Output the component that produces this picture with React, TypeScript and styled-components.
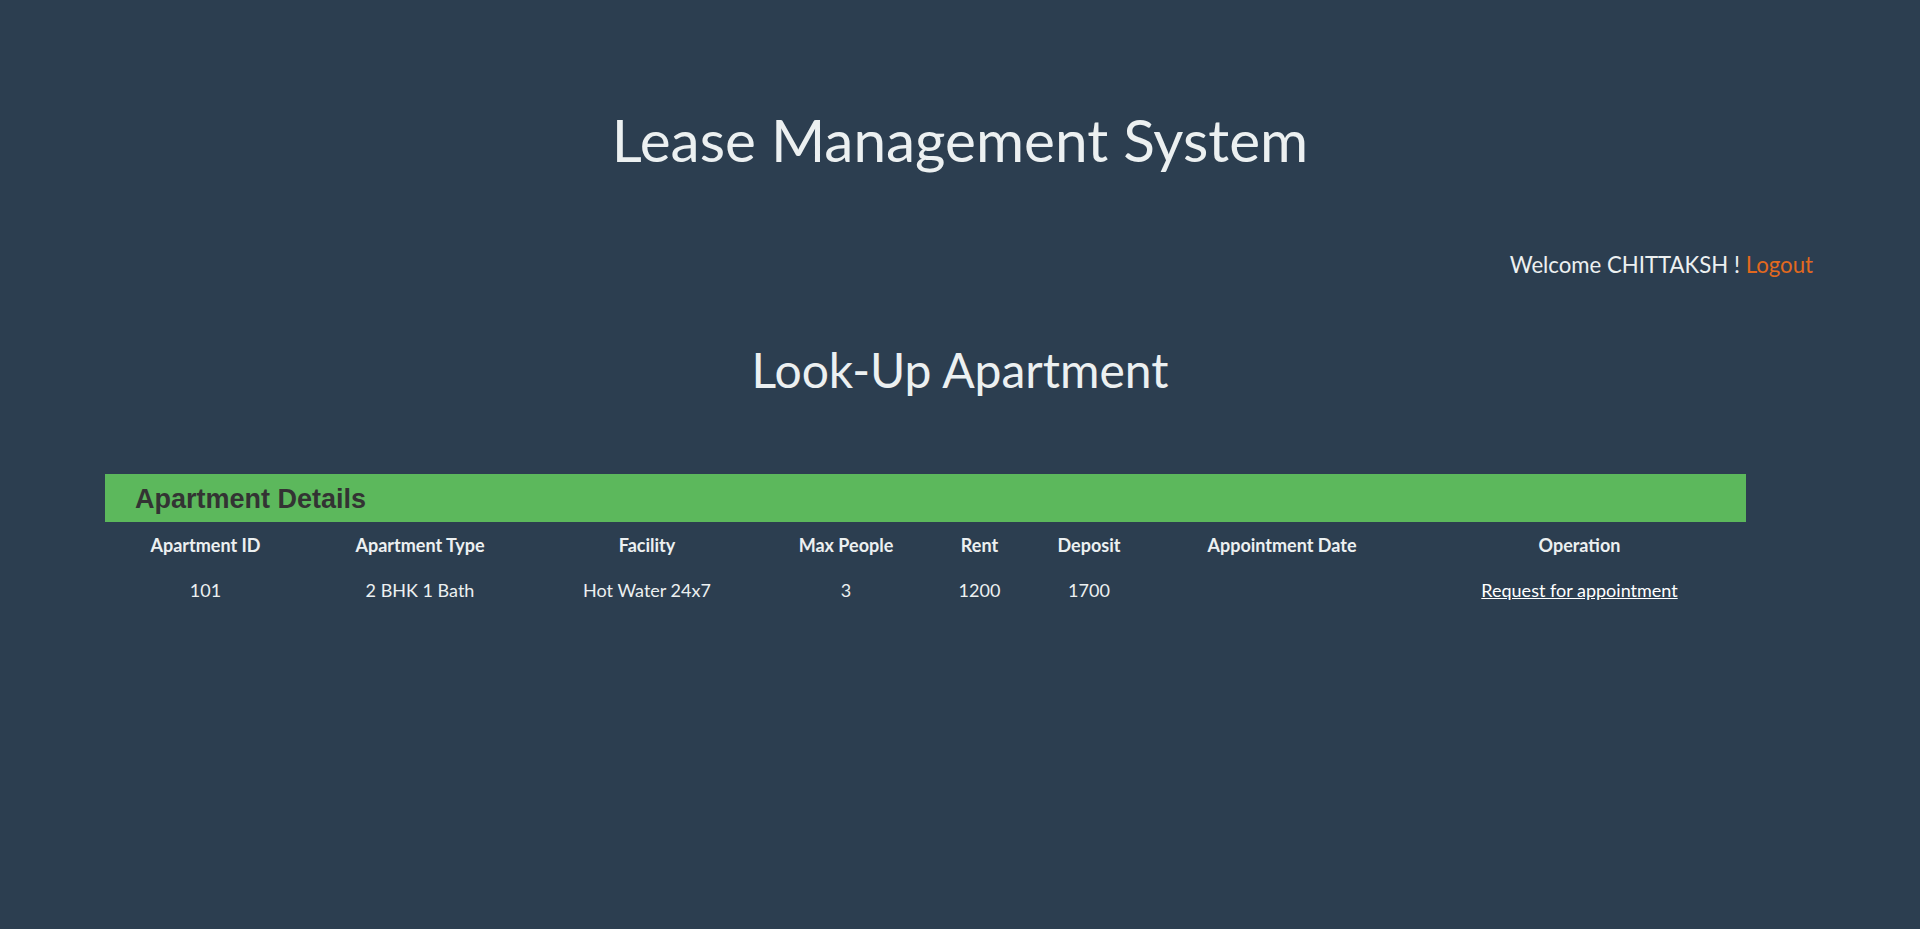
import React from "react";
import styled, { createGlobalStyle } from "styled-components";

const GlobalStyle = createGlobalStyle`
  html, body {
    margin: 0;
    padding: 0;
    background: #2c3e50;
    min-height: 100%;
  }
  body {
    font-family: Lato, "Liberation Sans", sans-serif;
    color: #ecf0f1;
  }
`;

const Page = styled.div`
  min-height: 929px;
  background: #2c3e50;
  padding-top: 103.5px;
  box-sizing: border-box;
`;

const Title = styled.h1`
  margin: 0;
  font-family: Lato, sans-serif;
  font-weight: 400;
  font-size: 58.5px;
  line-height: 1.2;
  text-align: center;
  color: #ecf0f1;
`;

const UserBar = styled.div`
  margin-top: 78.3px;
  padding-right: 107px;
  display: flex;
  justify-content: flex-end;
  font-size: 22.2px;
  line-height: 1.2;
  color: #ecf0f1;
  white-space: pre;
`;

const LogoutLink = styled.a`
  color: #e2691e;
  text-decoration: none;
  cursor: pointer;
`;

const Subtitle = styled.h2`
  margin: 62.5px 0 0;
  font-weight: 400;
  font-size: 48px;
  line-height: 1.2;
  text-align: center;
  color: #ecf0f1;
`;

const Section = styled.section`
  margin: 75.5px 174px 0 105px;
`;

const SectionBar = styled.div`
  height: 48px;
  box-sizing: border-box;
  padding: 2px 0 0 30px;
  display: flex;
  align-items: center;
  background: #5cb85c;
  color: #333333;
  font-family: "Liberation Sans", Arial, sans-serif;
  font-weight: 700;
  font-size: 27px;
`;

const Table = styled.table`
  width: 100%;
  border-collapse: collapse;
  table-layout: fixed;
  font-size: 18px;
  line-height: 1.2;
`;

const HeadCell = styled.th`
  padding: 13px 0 11px;
  font-weight: 700;
  text-align: center;
  color: #ecf0f1;
`;

const Cell = styled.td`
  padding: 12px 0 11px;
  font-weight: 400;
  text-align: center;
  color: #ecf0f1;
`;

const ActionLink = styled.a`
  color: #ffffff;
  text-decoration: underline;
  cursor: pointer;
`;

const columns = [
  { label: "Apartment ID", width: 201 },
  { label: "Apartment Type", width: 228 },
  { label: "Facility", width: 226 },
  { label: "Max People", width: 172 },
  { label: "Rent", width: 95 },
  { label: "Deposit", width: 124 },
  { label: "Appointment Date", width: 262 },
  { label: "Operation", width: 333 },
];

const rows = [
  {
    id: "101",
    type: "2 BHK 1 Bath",
    facility: "Hot Water 24x7",
    maxPeople: "3",
    rent: "1200",
    deposit: "1700",
    date: "",
  },
];

export default function App() {
  return (
    <>
      <GlobalStyle />
      <Page>
        <Title>Lease Management System</Title>
        <UserBar>
          <span>Welcome CHITTAKSH ! </span>
          <LogoutLink>Logout</LogoutLink>
        </UserBar>
        <Subtitle>Look-Up Apartment</Subtitle>
        <Section>
          <SectionBar>Apartment Details</SectionBar>
          <Table>
            <colgroup>
              {columns.map((c) => (
                <col key={c.label} style={{ width: c.width }} />
              ))}
            </colgroup>
            <thead>
              <tr>
                {columns.map((c) => (
                  <HeadCell key={c.label}>{c.label}</HeadCell>
                ))}
              </tr>
            </thead>
            <tbody>
              {rows.map((r) => (
                <tr key={r.id}>
                  <Cell>{r.id}</Cell>
                  <Cell>{r.type}</Cell>
                  <Cell>{r.facility}</Cell>
                  <Cell>{r.maxPeople}</Cell>
                  <Cell>{r.rent}</Cell>
                  <Cell>{r.deposit}</Cell>
                  <Cell>{r.date}</Cell>
                  <Cell>
                    <ActionLink>Request for appointment</ActionLink>
                  </Cell>
                </tr>
              ))}
            </tbody>
          </Table>
        </Section>
      </Page>
    </>
  );
}
